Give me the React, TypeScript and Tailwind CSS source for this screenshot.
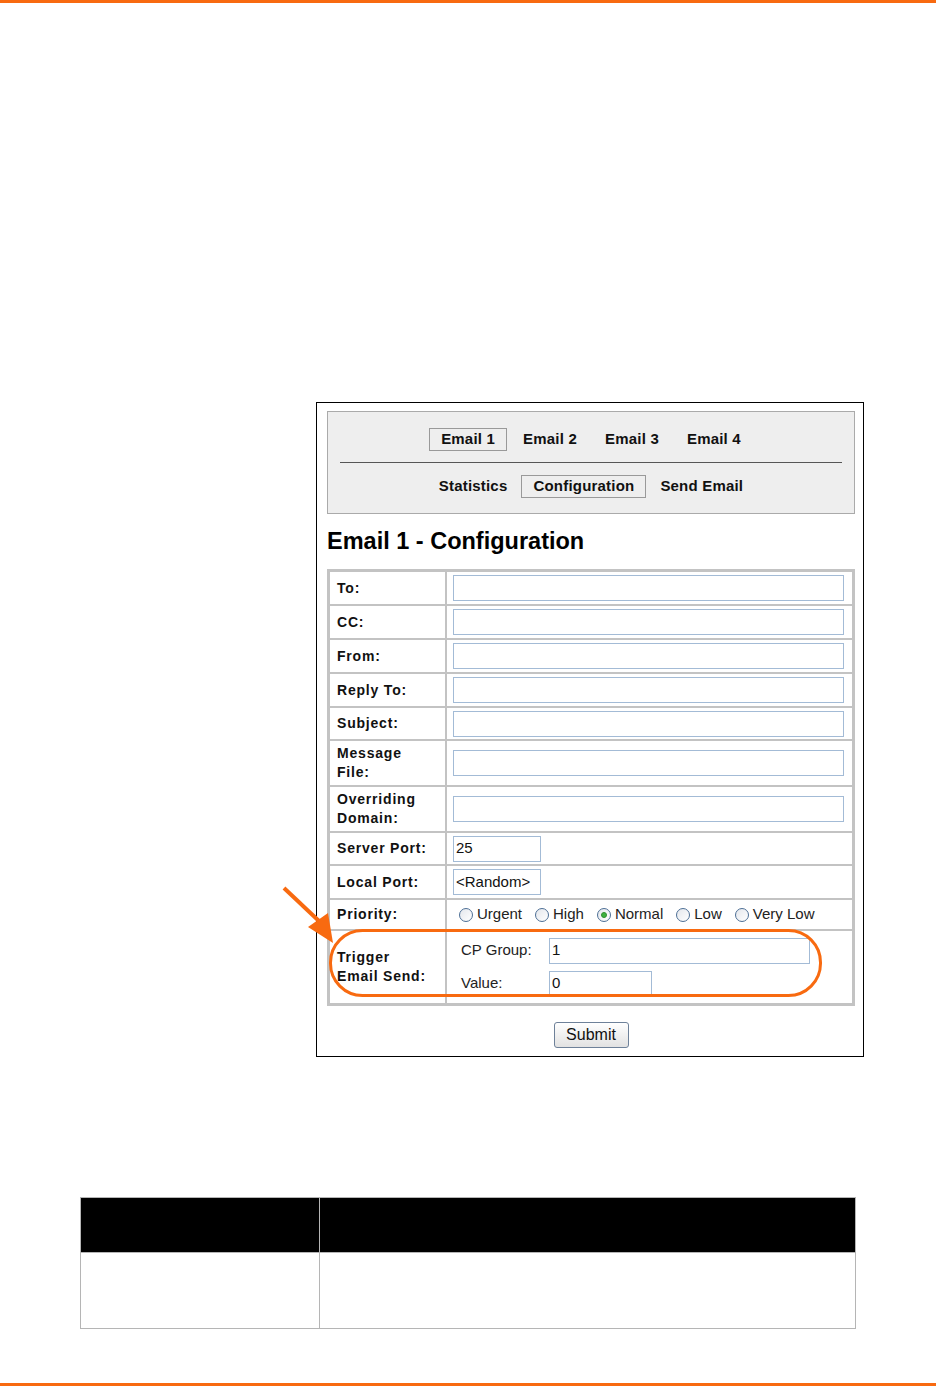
import React from "react";

const fieldRows: { label: string[]; h: string; kind: "wide" | "port"; value?: string }[] = [
  { label: ["To:"], h: "h-[32px]", kind: "wide" },
  { label: ["CC:"], h: "h-[32px]", kind: "wide" },
  { label: ["From:"], h: "h-[32px]", kind: "wide" },
  { label: ["Reply To:"], h: "h-[32px]", kind: "wide" },
  { label: ["Subject:"], h: "h-[31px]", kind: "wide" },
  { label: ["Message", "File:"], h: "h-[44px]", kind: "wide" },
  { label: ["Overriding", "Domain:"], h: "h-[44px]", kind: "wide" },
  { label: ["Server Port:"], h: "h-[31px]", kind: "port", value: "25" },
  { label: ["Local Port:"], h: "h-[32px]", kind: "port", value: "<Random>" },
];

const priorities = ["Urgent", "High", "Normal", "Low", "Very Low"];

function Label({ lines, h }: { lines: string[]; h: string }) {
  return (
    <div className={`${h} bg-white flex flex-col justify-center pl-[7px] text-[14px] font-bold tracking-[0.8px] leading-[19px] text-[#111]`}>
      {lines.map((l) => (
        <span key={l}>{l}</span>
      ))}
    </div>
  );
}

function Field({ w, value }: { w: string; value?: string }) {
  return (
    <div className={`${w} h-[26px] border border-[#a3bbd6] bg-white px-[2px] flex items-center text-[15px] text-[#111]`}>
      {value}
    </div>
  );
}

function Radio({ on }: { on?: boolean }) {
  return (
    <span className="w-[14px] h-[14px] rounded-full border border-[#4d6f96] bg-gradient-to-br from-[#e4e7ec] to-white flex items-center justify-center">
      {on && <span className="w-[6px] h-[6px] rounded-full bg-[#3fb23f] border border-[#2f8f2f]" />}
    </span>
  );
}

function Tab({ text, active }: { text: string; active?: boolean }) {
  return (
    <span
      className={`h-[23px] px-[11px] flex items-center border ${active ? "border-[#999999]" : "border-transparent"}`}
    >
      {text}
    </span>
  );
}

export default function App() {
  return (
    <div className="relative w-[936px] min-h-[1387px] bg-white font-['Liberation_Sans',Arial,sans-serif] flex flex-col">
      <div className="h-[3px] bg-[#f86a10]" />

      <div className="relative ml-[316px] mt-[399px] w-[548px] border border-black pt-[8px] pl-[10px] pr-[8px] pb-[8px]">
        {/* nav panel */}
        <div className="border border-[#aaaaaa] bg-[#eeeeee] pt-[16px] pb-[15px] text-[15px] font-bold text-[#111]">
          <div className="flex justify-center gap-[4px] tracking-[0.2px]">
            <Tab text="Email 1" active />
            <Tab text="Email 2" />
            <Tab text="Email 3" />
            <Tab text="Email 4" />
          </div>
          <div className="mx-[12px] mt-[11px] h-px bg-[#555555]" />
          <div className="mt-[12px] flex justify-center gap-[2px] tracking-[0.2px]">
            <Tab text="Statistics" />
            <Tab text="Configuration" active />
            <Tab text="Send Email" />
          </div>
        </div>

        <h1 className="mt-[13px] mb-[14px] text-[23.5px] leading-[28px] font-bold text-black">Email 1 - Configuration</h1>

        {/* form table */}
        <div className="grid grid-cols-[115px_1fr] gap-[2px] p-[3px] bg-[#c3c3c3]">
          {fieldRows.map((r) => (
            <React.Fragment key={r.label.join(" ")}>
              <Label lines={r.label} h={r.h} />
              <div className={`${r.h} bg-white flex items-center pl-[6px]`}>
                {r.kind === "wide" ? <Field w="w-[391px]" /> : <Field w="w-[88px]" value={r.value} />}
              </div>
            </React.Fragment>
          ))}

          <Label lines={["Priority:"]} h="h-[29px]" />
          <div className="h-[29px] bg-white flex items-center pl-[12px] text-[15px] text-[#222]">
            {priorities.map((p) => (
              <span key={p} className="flex items-center gap-[4px] mr-[13px]">
                <Radio on={p === "Normal"} />
                {p}
              </span>
            ))}
          </div>

          <Label lines={["Trigger", "Email Send:"]} h="h-[72px]" />
          <div className="h-[72px] bg-white flex flex-col justify-center gap-[7px] pl-[14px] text-[15px] text-[#222]">
            <div className="flex items-center">
              <span className="w-[88px]">CP Group:</span>
              <Field w="w-[261px]" value="1" />
            </div>
            <div className="flex items-center">
              <span className="w-[88px]">Value:</span>
              <Field w="w-[103px]" value="0" />
            </div>
          </div>
        </div>

        <div className="mt-[16px] flex justify-center">
          <button className="w-[75px] h-[26px] rounded-[3px] border border-[#6e8199] bg-gradient-to-b from-white to-[#e2e2e2] text-[16px] text-[#111]">
            Submit
          </button>
        </div>

        {/* highlight ring + arrow */}
        <svg className="absolute left-[-40px] top-[480px] w-[560px] h-[130px] pointer-events-none" viewBox="0 0 560 130">
          <rect x="53.5" y="47.5" width="490" height="65" rx="32" fill="none" stroke="#f86a10" strokeWidth="3" />
          <line x1="7" y1="5" x2="43" y2="39" stroke="#f86a10" strokeWidth="4" />
          <polygon points="56,60 31,44 51,30" fill="#f86a10" />
        </svg>
      </div>

      {/* bottom table */}
      <div className="ml-[80px] mt-[140px] w-[776px] grid grid-cols-[239px_1fr] border border-[#b5b5b5]">
        <div className="h-[54px] bg-black border-r border-[#b5b5b5]" />
        <div className="h-[54px] bg-black" />
        <div className="h-[76px] bg-white border-r border-t border-[#b5b5b5]" />
        <div className="h-[76px] bg-white border-t border-[#b5b5b5]" />
      </div>

      <div className="mt-[54px] h-[3px] bg-[#f86a10]" />
    </div>
  );
}
